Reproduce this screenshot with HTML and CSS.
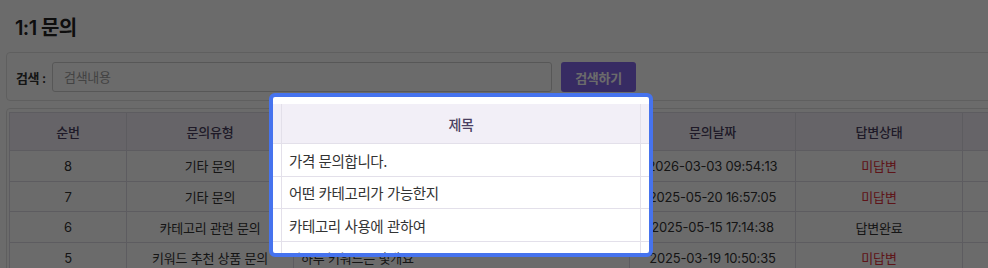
FILE: index.html
```html
<!DOCTYPE html>
<html lang="ko">
<head>
    <meta charset="UTF-8">
    <meta name="viewport" content="width=device-width, initial-scale=1.0">
    <title>1:1 문의</title>
    <link rel="stylesheet" href="styles.css">
</head>
<body>

    <div class="page">
        <h1 class="page-title">1:1 문의</h1>

        <!-- Search -->
        <div class="search-card">
            <label class="search-label" for="keyword">검색 :</label>
            <input class="search-input" id="keyword" type="text" placeholder="검색내용">
            <button class="search-btn">검색하기</button>
        </div>

        <!-- Inquiry list -->
        <div class="table-card">
            <table class="qna-table">
                <colgroup>
                    <col class="c-no">
                    <col class="c-type">
                    <col class="c-title">
                    <col class="c-date">
                    <col class="c-state">
                    <col class="c-more">
                </colgroup>
                <thead>
                    <tr>
                        <th>순번</th>
                        <th>문의유형</th>
                        <th>제목</th>
                        <th>문의날짜</th>
                        <th>답변상태</th>
                        <th>상세</th>
                    </tr>
                </thead>
                <tbody>
                    <tr>
                        <td>8</td>
                        <td>기타 문의</td>
                        <td class="title">가격 문의합니다.</td>
                        <td>2026-03-03 09:54:13</td>
                        <td class="wait">미답변</td>
                        <td></td>
                    </tr>
                    <tr>
                        <td>7</td>
                        <td>기타 문의</td>
                        <td class="title">어떤 카테고리가 가능한지</td>
                        <td>2025-05-20 16:57:05</td>
                        <td class="wait">미답변</td>
                        <td></td>
                    </tr>
                    <tr>
                        <td>6</td>
                        <td>카테고리 관련 문의</td>
                        <td class="title">카테고리 사용에 관하여</td>
                        <td>2025-05-15 17:14:38</td>
                        <td>답변완료</td>
                        <td></td>
                    </tr>
                    <tr>
                        <td>5</td>
                        <td>키워드 추천 상품 문의</td>
                        <td class="title">하루 키워드는 몇개요</td>
                        <td>2025-03-19 10:50:35</td>
                        <td class="wait">미답변</td>
                        <td></td>
                    </tr>
                </tbody>
            </table>
        </div>
    </div>

    <!-- Guide highlight: title column -->
    <div class="tour-spot">
        <table class="spot-table">
            <thead>
                <tr>
                    <th class="edge-l"></th>
                    <th class="main">제목</th>
                    <th class="edge-r"></th>
                </tr>
            </thead>
            <tbody>
                <tr>
                    <td class="edge-l"></td>
                    <td class="main">가격 문의합니다.</td>
                    <td class="edge-r"></td>
                </tr>
                <tr class="short">
                    <td class="edge-l"></td>
                    <td class="main">어떤 카테고리가 가능한지</td>
                    <td class="edge-r"></td>
                </tr>
                <tr>
                    <td class="edge-l"></td>
                    <td class="main">카테고리 사용에 관하여</td>
                    <td class="edge-r"></td>
                </tr>
                <tr>
                    <td class="edge-l"></td>
                    <td class="main">하루 키워드는 몇개요</td>
                    <td class="edge-r"></td>
                </tr>
            </tbody>
        </table>
    </div>

</body>
</html>
```

FILE: styles.css
```css
* {
    margin: 0;
    padding: 0;
    box-sizing: border-box;
    font-family: Inter, "Noto Sans CJK KR", sans-serif;
}
body {
    background-color: #fff;
    color: #333;
    overflow: hidden;
}
.page {
    width: 1100px;
    padding: 14px 0 0 6px;
}
.page-title {
    margin-left: 9px;
    font-size: 20px;
    font-weight: 600;
    line-height: 28px;
    letter-spacing: -0.6px;
    color: #222;
}

/* search */
.search-card {
    display: flex;
    align-items: center;
    margin-top: 10px;
    padding: 9px 9px 8px;
    border: 1px solid #e2e2e2;
    border-radius: 4px;
}
.search-label {
    width: 29px;
    margin-right: 7px;
    font-size: 13px;
    font-weight: 600;
    letter-spacing: -0.4px;
    color: #333;
    white-space: nowrap;
}
.search-input {
    width: 500px;
    height: 30px;
    padding: 0 11px;
    border: 1px solid #cfcfcf;
    border-radius: 3px;
    font-size: 13px;
    letter-spacing: -0.3px;
    color: #333;
    outline: none;
}
.search-input::placeholder {
    color: #a0a0a0;
}
.search-btn {
    width: 75px;
    height: 30px;
    margin-left: 9px;
    border: none;
    border-radius: 3px;
    background-color: #8466ec;
    color: #fff;
    font-size: 13px;
    font-weight: 600;
    letter-spacing: -0.3px;
    cursor: pointer;
}

/* table */
.table-card {
    margin-top: 7px;
    padding: 3px 2px;
    border: 1px solid #e2e2e2;
    border-radius: 4px;
}
.qna-table {
    width: 1070px;
    border-collapse: collapse;
    table-layout: fixed;
    font-size: 13px;
    letter-spacing: -0.2px;
}
.c-no { width: 117px; }
.c-type { width: 167px; }
.c-title { width: 336px; }
.c-date { width: 166px; }
.c-state { width: 167px; }
.c-more { width: 117px; }
.qna-table th,
.qna-table td {
    border: 1px solid #dedbe5;
    text-align: center;
    white-space: nowrap;
    overflow: hidden;
}
.qna-table th {
    height: 38px;
    background-color: #f2eff7;
    color: #4a3f61;
    font-weight: 500;
}
.qna-table td {
    height: 30.7px;
    color: #333;
}
.qna-table td.title {
    text-align: left;
    padding-left: 7px;
}
.qna-table td.wait {
    color: #e0323c;
}

/* guide highlight */
.tour-spot {
    position: absolute;
    left: 269px;
    top: 93px;
    width: 384px;
    height: 164px;
    padding-top: 7px;
    border: 4px solid #4673ee;
    border-radius: 6px;
    background-color: #fff;
    overflow: hidden;
    box-shadow: 0 0 0 2000px rgba(0, 0, 0, 0.58);
}
.spot-table {
    width: 376px;
    border-collapse: separate;
    border-spacing: 0;
    table-layout: fixed;
    font-size: 14.5px;
    letter-spacing: -0.4px;
}
.spot-table th,
.spot-table td {
    border-bottom: 1px solid #e3e0ea;
    white-space: nowrap;
    overflow: hidden;
}
.spot-table .edge-l {
    width: 9px;
    border-right: 1px solid #e3e0ea;
}
.spot-table .main {
    width: 359px;
    border-right: 1px solid #e3e0ea;
}
.spot-table .edge-r {
    width: 8px;
}
.spot-table th {
    height: 40px;
    background-color: #f2eff7;
    color: #4a3f61;
    font-size: 14px;
    font-weight: 500;
    text-align: center;
}
.spot-table td {
    height: 33px;
    color: #333;
}
.spot-table tr.short td {
    height: 32px;
}
.spot-table td.main {
    padding-left: 7px;
}
```
